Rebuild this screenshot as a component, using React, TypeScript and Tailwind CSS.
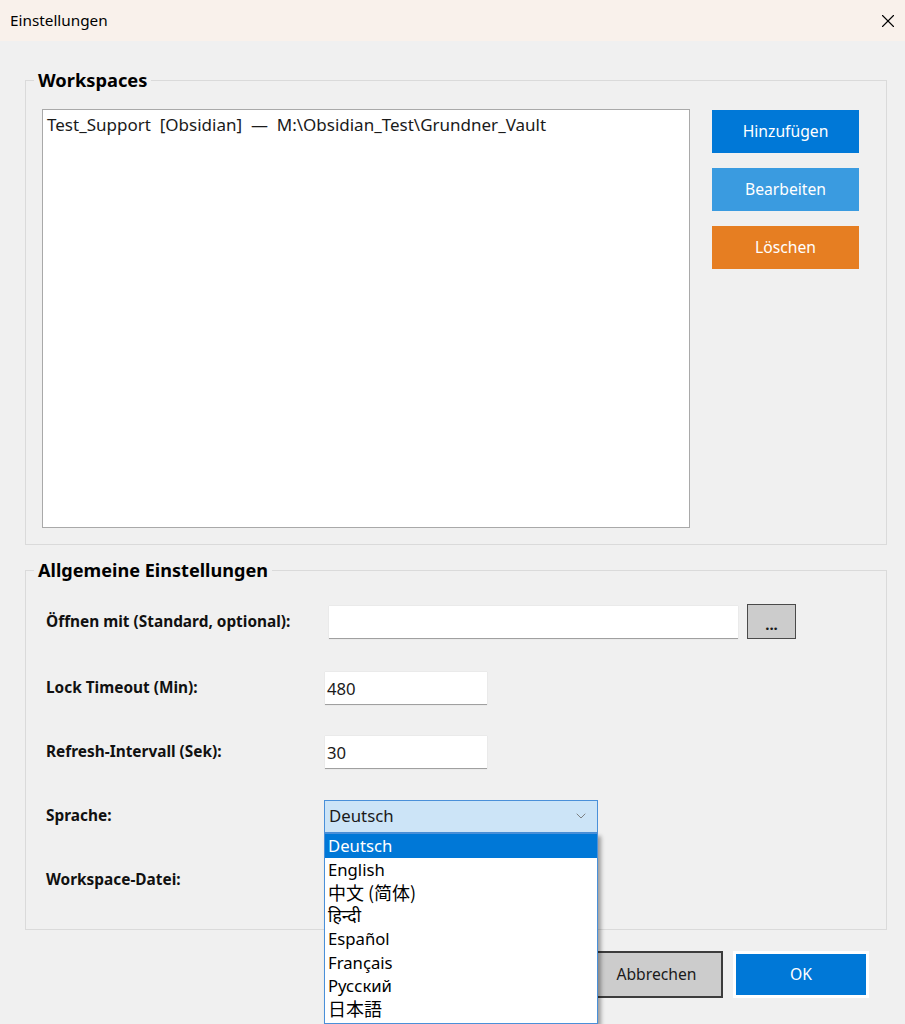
import { X, ChevronDown } from "lucide-react";

const languages = [
  { label: "English", kind: "latin" },
  { label: "中文 (简体)", kind: "cjk" },
  { label: "हिन्दी", kind: "deva" },
  { label: "Español", kind: "latin" },
  { label: "Français", kind: "latin" },
  { label: "Русский", kind: "latin" },
  { label: "日本語", kind: "cjk" },
];

function FieldRow({ label, children }: { label: string; children: React.ReactNode }) {
  return (
    <div className="flex items-center h-[34px]">
      <div className="w-[279px] shrink-0 text-[15.4px] font-bold text-[#111]">{label}</div>
      {children}
    </div>
  );
}

export default function App() {
  return (
    <div className="relative w-[905px] h-[1024px] overflow-hidden bg-[#f0f0f0] font-['Noto_Sans','Noto_Sans_CJK_SC',sans-serif] text-[#1a1a1a]">
      {/* title bar */}
      <div className="h-[41px] bg-[#f9f1eb] flex items-center justify-between pl-[10px] pr-[6px]">
        <span className="text-[15.3px] text-black">Einstellungen</span>
        <X className="size-[22px] text-black" strokeWidth={1.2} />
      </div>

      <div className="pl-[25px] pr-[18px]">
        {/* Workspaces */}
        <fieldset className="mt-[27px] border border-[#dadada] pl-[16px] pr-[27px] pt-[17px] pb-[16px]">
          <legend className="-ml-[8px] px-[4px] text-[18.3px] leading-[24px] font-bold text-black">Workspaces</legend>
          <div className="flex">
            <div className="w-[648px] h-[419px] bg-white border border-[#a9a9a9] pl-[4px] pt-[2px] text-[17px] whitespace-pre">
              Test_Support  [Obsidian]  —  M:\Obsidian_Test\Grundner_Vault
            </div>
            <div className="ml-[22px] mt-[1px] flex flex-col gap-[15px]">
              <button className="w-[147px] h-[43px] bg-[#0078d7] text-white text-[15.7px]">Hinzufügen</button>
              <button className="w-[147px] h-[43px] bg-[#3a9be0] text-white text-[15.7px]">Bearbeiten</button>
              <button className="w-[147px] h-[43px] bg-[#e67e22] text-white text-[15.7px]">Löschen</button>
            </div>
          </div>
        </fieldset>

        {/* Allgemeine Einstellungen */}
        <fieldset className="mt-[13px] border border-[#dadada] pl-[20px] pt-[22px] pb-[32px]">
          <legend className="-ml-[12px] px-[4px] text-[18.1px] leading-[24px] font-bold text-black">
            Allgemeine Einstellungen
          </legend>
          <div className="flex flex-col gap-[30px]">
            <div className="flex items-center h-[35px] mb-[2px]">
              <div className="w-[279px] shrink-0 text-[15.4px] font-bold text-[#111]">Öffnen mit (Standard, optional):</div>
              <div className="ml-[4px] w-[409px] h-[33px] self-end bg-white border-b border-[#a0a0a0] shadow-[0_0_1px_rgba(0,0,0,0.15)]" />
              <button className="ml-[9px] w-[49px] h-[35px] bg-[#cccccc] border border-[#4a4a4a] text-[15px] font-bold leading-none pt-[6px]">
                ...
              </button>
            </div>
            <FieldRow label="Lock Timeout (Min):">
              <div className="w-[162px] h-[33px] bg-white border-b border-[#a0a0a0] shadow-[0_0_1px_rgba(0,0,0,0.15)] pl-[2px] text-[16.7px] leading-[33px]">
                480
              </div>
            </FieldRow>
            <FieldRow label="Refresh-Intervall (Sek):">
              <div className="w-[162px] h-[33px] bg-white border-b border-[#a0a0a0] shadow-[0_0_1px_rgba(0,0,0,0.15)] pl-[2px] text-[16.7px] leading-[33px]">
                30
              </div>
            </FieldRow>
            <FieldRow label="Sprache:">
              <div className="relative -ml-[1px] w-[274px] h-[33px]">
                <div className="w-full h-full bg-[#cce4f7] border border-[#4a90d9] flex items-center justify-between pl-[4px] pr-[8px] text-[16.8px]">
                  <span>Deutsch</span>
                  <ChevronDown className="size-[16px] text-[#707070]" strokeWidth={1.3} />
                </div>
                {/* open dropdown list */}
                <div className="absolute left-0 top-full z-10 w-full bg-white border border-[#4a90d9] shadow-[3px_3px_4px_rgba(0,0,0,0.35)] text-[16.7px] pb-[2px]">
                  <div className="h-[24px] leading-[24px] bg-[#0078d7] text-white pl-[3px]">Deutsch</div>
                  {languages.map((l) => (
                    <div
                      key={l.label}
                      className={
                        l.kind === "cjk"
                          ? "h-[23.3px] leading-[23.3px] pl-[3px] text-black text-[18px] font-['Noto_Sans_CJK_JP','Noto_Sans_CJK_SC',sans-serif]"
                          : l.kind === "deva"
                            ? "h-[23.3px] leading-[23.3px] pl-[3px] text-black text-[17.5px]"
                            : "h-[23.3px] leading-[23.3px] pl-[3px] text-black"
                      }
                    >
                      {l.label}
                    </div>
                  ))}
                </div>
              </div>
            </FieldRow>
            <FieldRow label="Workspace-Datei:">
              <div />
            </FieldRow>
          </div>
        </fieldset>

        {/* footer buttons */}
        <div className="mt-[21px] flex justify-end gap-[10px] pr-[18px]">
          <button className="w-[133px] h-[47px] bg-[#cccccc] border-2 border-[#3c3c3c] text-[15.7px] text-[#1a1a1a]">
            Abbrechen
          </button>
          <button className="w-[136px] h-[47px] bg-[#0078d7] border-[3px] border-white text-white text-[15.7px]">
            OK
          </button>
        </div>
      </div>
    </div>
  );
}
